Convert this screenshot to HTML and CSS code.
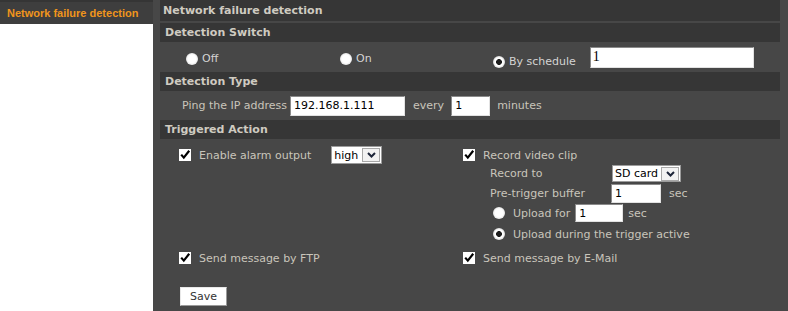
FILE: index.html
```html
<!DOCTYPE html>
<html>
<head>
<meta charset="utf-8">
<title>Network failure detection</title>
<link rel="stylesheet" href="styles.css">
</head>
<body>
<div class="page">
  <aside class="side">
    <div class="side-item">Network failure detection</div>
  </aside>
  <main class="panel">
    <div class="title">Network failure detection</div>

    <div class="sec">Detection Switch</div>
    <div class="switch-row">
      <label class="opt"><span class="radio"></span><span>Off</span></label>
      <label class="opt"><span class="radio"></span><span>On</span></label>
      <div class="opt">
        <span class="radio on"></span><span>By schedule</span>
        <span class="inp sched">1</span>
      </div>
    </div>

    <div class="sec">Detection Type</div>
    <div class="ping-row">
      <span>Ping the IP address</span>
      <span class="inp ip">192.168.1.111</span>
      <span class="every">every</span>
      <span class="inp mins">1</span>
      <span class="minutes">minutes</span>
    </div>

    <div class="sec">Triggered Action</div>
    <div class="trig">
      <div class="col">
        <div class="line r1">
          <span class="check"><svg width="12" height="12" viewBox="0 0 12 12"><rect width="12" height="12" fill="#fff"/><path d="M2.2 5.6 L4.8 8.6 L10.2 1.8" fill="none" stroke="#000" stroke-width="2.2"/></svg></span>
          <span class="lbl">Enable alarm output</span>
          <span class="sel alarm"><span class="sel-txt">high</span><span class="sel-btn"><svg width="11" height="8" viewBox="0 0 11 8"><path d="M2 2 L5.5 5.5 L9 2" fill="none" stroke="#1c2438" stroke-width="2"/></svg></span></span>
        </div>
      </div>
      <div class="col">
        <div class="line r1">
          <span class="check"><svg width="12" height="12" viewBox="0 0 12 12"><rect width="12" height="12" fill="#fff"/><path d="M2.2 5.6 L4.8 8.6 L10.2 1.8" fill="none" stroke="#000" stroke-width="2.2"/></svg></span>
          <span class="lbl">Record video clip</span>
        </div>
        <div class="sub">
          <div class="line r2">
            <span class="key">Record to</span>
            <span class="sel sd"><span class="sel-txt">SD card</span><span class="sel-btn"><svg width="11" height="8" viewBox="0 0 11 8"><path d="M2 2 L5.5 5.5 L9 2" fill="none" stroke="#1c2438" stroke-width="2"/></svg></span></span>
          </div>
          <div class="line r3">
            <span class="key">Pre-trigger buffer</span>
            <span class="inp buf">1</span>
            <span class="unit">sec</span>
          </div>
          <div class="line r4 up">
            <span class="radio"></span>
            <span class="lbl">Upload for</span>
            <span class="inp upl">1</span>
            <span class="unit2">sec</span>
          </div>
          <div class="line r5 up">
            <span class="radio on"></span>
            <span class="lbl">Upload during the trigger active</span>
          </div>
        </div>
      </div>
      <div class="col">
        <div class="line send">
          <span class="check"><svg width="12" height="12" viewBox="0 0 12 12"><rect width="12" height="12" fill="#fff"/><path d="M2.2 5.6 L4.8 8.6 L10.2 1.8" fill="none" stroke="#000" stroke-width="2.2"/></svg></span>
          <span class="lbl">Send message by FTP</span>
        </div>
      </div>
      <div class="col">
        <div class="line send">
          <span class="check"><svg width="12" height="12" viewBox="0 0 12 12"><rect width="12" height="12" fill="#fff"/><path d="M2.2 5.6 L4.8 8.6 L10.2 1.8" fill="none" stroke="#000" stroke-width="2.2"/></svg></span>
          <span class="lbl">Send message by E-Mail</span>
        </div>
      </div>
    </div>
    <div class="save-row"><span class="btn">Save</span></div>
  </main>
</div>
</body>
</html>
```

FILE: styles.css
```css
html, body {
  margin: 0;
  padding: 0;
  background: #ffffff;
}
.page {
  display: flex;
  height: 311px;
  overflow: hidden;
  font-family: "DejaVu Sans", Verdana, sans-serif;
  font-size: 11px;
  color: #c9c5bb;
  white-space: nowrap;
}
.side {
  width: 153px;
  flex: none;
}
.side-item {
  height: 24px;
  box-sizing: border-box;
  background: #3e3e3e;
  border-top: 2px solid #353535;
  padding: 5px 0 0 7px;
  font-family: "Liberation Sans", Arial, sans-serif;
  font-weight: bold;
  font-size: 11px;
  color: #f0951c;
}
.panel {
  flex: 1;
  background: #474747;
  padding: 0 8px 0 7px;
}
.title {
  height: 21px;
  margin-bottom: 2px;
  background: #363636;
  padding-left: 3px;
  display: flex;
  align-items: center;
  font-weight: bold;
  font-size: 11px;
  color: #cfcbc1;
}
.sec {
  height: 19px;
  background: #363636;
  padding-left: 5px;
  display: flex;
  align-items: center;
  font-weight: bold;
  font-size: 11px;
  color: #cfcbc1;
}
.switch-row {
  height: 30px;
  display: grid;
  grid-template-columns: 154px 153px auto;
  padding-left: 26px;
  align-items: center;
}
.opt {
  display: flex;
  align-items: flex-end;
  gap: 4px;
  color: #d4d4d4;
  padding-top: 2px;
}
.opt .sched {
  margin-left: 10px;
  align-self: center;
  margin-top: -2px;
}
.radio {
  display: inline-block;
  width: 12px;
  height: 12px;
  border-radius: 50%;
  background: radial-gradient(circle, #ffffff 0 4px, #e6e6e6 6px);
  flex: none;
}
.radio.on {
  background: radial-gradient(circle, #1d1d1d 0 2.6px, #ffffff 3.2px 4.2px, #d8d8d8 6px);
}
.inp {
  display: inline-flex;
  align-items: center;
  box-sizing: border-box;
  background: #ffffff;
  border: 1px solid;
  border-color: #8a8a8a #e2e2e2 #e2e2e2 #8a8a8a;
  color: #000;
  padding-left: 3px;
  flex: none;
}
.sched {
  width: 164px;
  height: 21px;
  font-family: "Liberation Serif", "Times New Roman", serif;
  font-size: 14px;
  padding-left: 2px;
}
.ping-row {
  height: 29px;
  display: flex;
  align-items: center;
  padding-left: 22px;
}
.ip {
  width: 115px;
  height: 20px;
  margin-left: 3px;
}
.every {
  margin-left: 8px;
}
.mins {
  width: 39px;
  height: 20px;
  margin-left: 7px;
}
.minutes {
  margin-left: 7px;
}
.trig {
  display: grid;
  grid-template-columns: 284px auto;
  padding: 7px 0 0 19px;
}
.line {
  display: flex;
  align-items: center;
}
.check {
  display: inline-flex;
  width: 12px;
  height: 12px;
  flex: none;
}
.check + .lbl {
  margin-left: 8px;
}
.r1 {
  height: 18px;
}
.sel {
  display: inline-flex;
  align-items: center;
  box-sizing: border-box;
  background: #ffffff;
  border: 1px solid #9c9c9c;
  color: #000;
  flex: none;
}
.sel-txt {
  padding-left: 2px;
  flex: 1;
}
.sel-btn {
  display: flex;
  align-items: center;
  justify-content: center;
  box-sizing: border-box;
  width: 18px;
  height: 14px;
  margin-right: 1px;
  background: #f2f2f2;
  border: 1px solid #a8a8a8;
}
.alarm {
  width: 51px;
  height: 18px;
  margin-left: 20px;
}
.sub {
  padding-left: 27px;
}
.key {
  width: 121px;
  flex: none;
}
.r2 {
  height: 19px;
}
.sd {
  width: 69px;
  height: 17px;
  margin-left: 1px;
}
.r3 {
  height: 20px;
}
.buf {
  width: 50px;
  height: 19px;
}
.unit {
  margin-left: 8px;
}
.up {
  padding-left: 3px;
}
.up .radio + .lbl {
  margin-left: 8px;
}
.r4 {
  height: 20px;
}
.upl {
  width: 48px;
  height: 18px;
  margin-left: 5px;
}
.unit2 {
  margin-left: 5px;
}
.r5 {
  height: 22px;
}
.send {
  height: 18px;
  margin-top: 4px;
}
.save-row {
  padding: 20px 0 0 20px;
}
.btn {
  display: inline-flex;
  align-items: center;
  justify-content: center;
  box-sizing: border-box;
  width: 47px;
  height: 19px;
  background: #ffffff;
  border: 1px solid;
  border-color: #e8e8e8 #9a9a9a #9a9a9a #e8e8e8;
  color: #333;
}
```
